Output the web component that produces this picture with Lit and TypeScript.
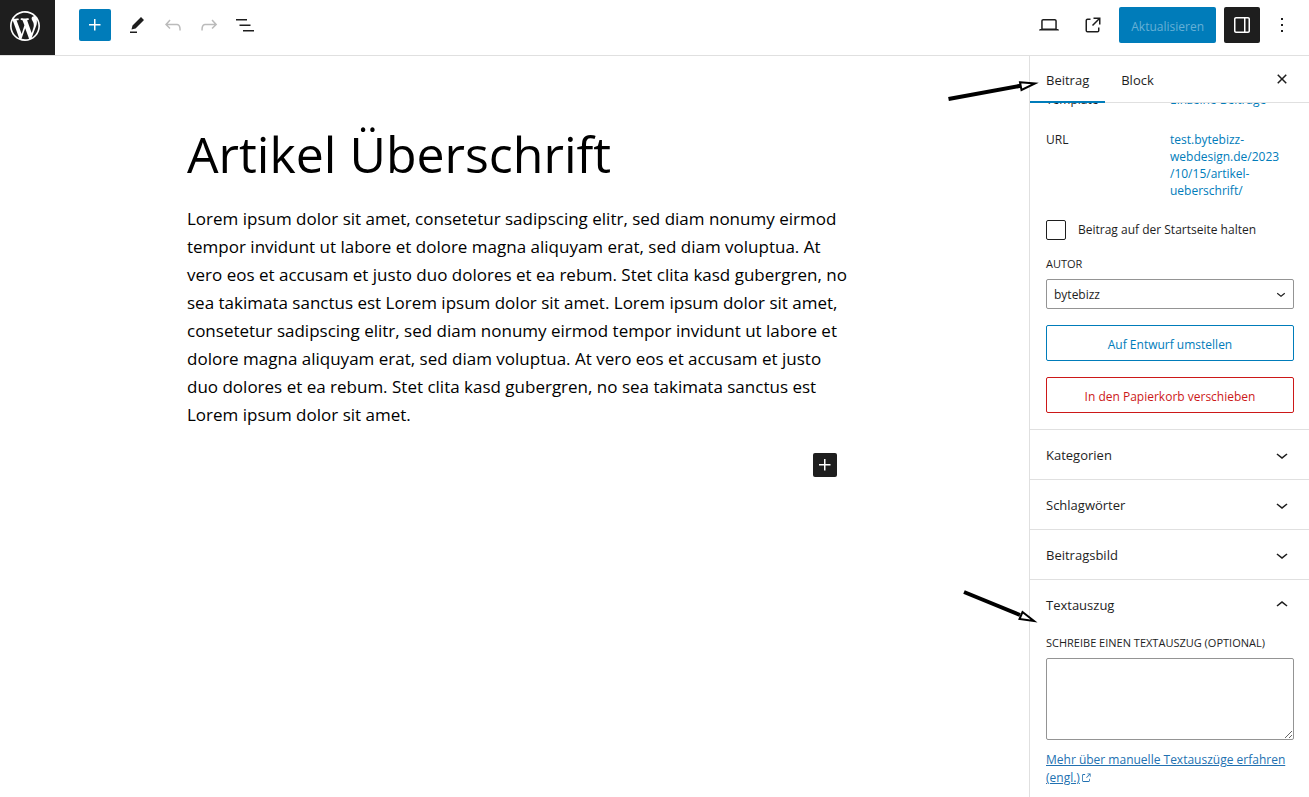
import { LitElement, html, css, svg } from "lit";
import { customElement, property, state } from "lit/decorators.js";
import { classMap } from "lit/directives/class-map.js";

const ICONS = {
  plus: "M11 12.5V17.5H12.5V12.5H17.5V11H12.5V6H11V11H6V12.5H11Z",
  edit: "m19 7-3-3-8.5 8.5-1 4 4-1L19 7Zm-7 11.5H5V20h7v-1.5Z",
  undo: "M18.3 11.7c-.6-.6-1.4-.9-2.3-.9H6.7l2.9-3.3-1.1-1-4.5 5L8.5 16l1-1-2.7-2.7H16c.5 0 .9.2 1.3.5 1 1 1 3.4 1 4.5v.3h1.5v-.2c0-1.5 0-4.3-1.5-5.7z",
  redo: "M15.6 6.5l-1.1 1 2.9 3.3H8c-.9 0-1.7.3-2.3.9-1.4 1.5-1.4 4.2-1.4 5.6v.2h1.5v-.3c0-1.1 0-3.5 1-4.5.3-.3.7-.5 1.3-.5h9.2L14.5 15l1.1 1.1 4.6-4.6-4.6-5z",
  list: "M3 6h11v1.5H3V6Zm3.5 5.5h11V13h-11v-1.5ZM21 17H10v1.5h11V17Z",
  desktop: "M20.5 16h-.7V8c0-1.1-.9-2-2-2H6.2c-1.1 0-2 .9-2 2v8h-.7c-.8 0-1.5.7-1.5 1.5h20c0-.8-.7-1.5-1.5-1.5zM5.7 8c0-.3.2-.5.5-.5h11.6c.3 0 .5.2.5.5v7.6H5.7V8z",
  view: "M19.5 4.5h-7V6h4.44l-5.97 5.97 1.06 1.06L18 7.06v4.44h1.5v-7Zm-13 1a2 2 0 0 0-2 2v10a2 2 0 0 0 2 2h10a2 2 0 0 0 2-2v-3H17v3a.5.5 0 0 1-.5.5h-10a.5.5 0 0 1-.5-.5v-10a.5.5 0 0 1 .5-.5h3V5.5h-3Z",
  external: "M18.2 17c0 .7-.6 1.2-1.2 1.2H7c-.7 0-1.2-.6-1.2-1.2V7c0-.7.6-1.2 1.2-1.2h3.2V4.2H7C5.5 4.2 4.2 5.5 4.2 7v10c0 1.5 1.2 2.8 2.8 2.8h10c1.5 0 2.8-1.2 2.8-2.8v-3.6h-1.5V17zM14.9 3v1.5h3.7l-6.4 6.4 1.1 1.1 6.4-6.4v3.7h1.5V3h-6.3z",
  drawer: "M18 4H6c-1.1 0-2 .9-2 2v12c0 1.1.9 2 2 2h12c1.1 0 2-.9 2-2V6c0-1.1-.9-2-2-2zm-4 14.5H6c-.3 0-.5-.2-.5-.5V6c0-.3.2-.5.5-.5h8v13zm4.5-.5c0 .3-.2.5-.5.5h-2.5v-13H18c.3 0 .5.2.5.5v12z",
  more: "M13 19h-2v-2h2v2zm0-6h-2v-2h2v2zm0-6h-2V5h2v2z",
  close: "M12 13.06l3.712 3.713 1.061-1.06L13.061 12l3.712-3.712-1.06-1.06L12 10.938 8.288 7.227l-1.061 1.06L10.939 12l-3.712 3.712 1.06 1.061L12 13.061z",
  down: "M17.5 11.6L12 16l-5.5-4.4.9-1.2L12 14l4.5-3.6 1 1.2z",
  up: "M6.5 12.4L12 8l5.5 4.4-.9 1.2L12 10l-4.5 3.6-1-1.2z",
};

const LOGO =
  "M20 10c0-5.51-4.49-10-10-10C4.48 0 0 4.49 0 10c0 5.52 4.48 10 10 10 5.51 0 10-4.48 10-10zM7.78 15.37L4.37 6.22c.55-.02 1.17-.08 1.17-.08.5-.06.44-1.13-.06-1.11 0 0-1.45.11-2.37.11-.18 0-.37 0-.58-.01C4.12 2.69 6.87 1.11 10 1.11c2.33 0 4.45.87 6.05 2.34-.68-.11-1.65.39-1.65 1.58 0 .74.45 1.36.9 2.1.35.61.55 1.36.55 2.46 0 1.49-1.4 5-1.4 5l-3.03-8.37c.54-.02.82-.17.82-.17.5-.05.44-1.25-.06-1.22 0 0-1.44.12-2.38.12-.87 0-2.33-.12-2.33-.12-.5-.03-.56 1.2-.06 1.22l.92.08 1.26 3.41zM17.41 10c.24-.64.74-1.87.43-4.25.7 1.29 1.05 2.71 1.05 4.25 0 3.29-1.73 6.24-4.4 7.78.97-2.59 1.94-5.2 2.92-7.78zM6.1 18.09C3.12 16.65 1.11 13.53 1.11 10c0-1.3.23-2.48.72-3.59C3.25 10.3 4.67 14.2 6.1 18.09zm4.03-6.63l2.58 6.98c-.86.29-1.76.45-2.71.45-.79 0-1.57-.11-2.29-.33.81-2.38 1.62-4.74 2.42-7.1z";

const icon = (name: keyof typeof ICONS, size = 24) => html`<svg
  width=${size}
  height=${size}
  viewBox="0 0 24 24"
  fill="currentColor"
  aria-hidden="true"
>
  ${svg`<path d=${ICONS[name]}></path>`}
</svg>`;

const shared = css`
  :host,
  * {
    box-sizing: border-box;
  }
  svg {
    display: block;
    flex: none;
  }
  button {
    display: flex;
    align-items: center;
    justify-content: center;
    margin: 0;
    padding: 0;
    border: 0;
    border-radius: 2px;
    background: none;
    color: #1e1e1e;
    font: inherit;
    cursor: pointer;
  }
`;

@customElement("editor-header")
class EditorHeader extends LitElement {
  static styles = [
    shared,
    css`
      :host {
        display: flex;
        align-items: center;
        height: 56px;
        border-bottom: 1px solid #e0e0e0;
        background: #fff;
      }
      .logo {
        align-self: stretch;
        display: flex;
        align-items: center;
        width: 55px;
        padding: 0 7px 3px;
        background: #1e1e1e;
        color: #fff;
      }
      .tools {
        display: flex;
        align-items: center;
        flex: 1;
        padding: 0 0 5px 24px;
      }
      .actions {
        display: flex;
        align-items: center;
        gap: 8px;
        padding: 0 11px 5px 0;
      }
      .tool {
        width: 36px;
        height: 36px;
      }
      .tool[disabled] {
        color: #bbb;
      }
      .add {
        width: 32px;
        height: 32px;
        margin-right: 8px;
        background: #007cba;
        color: #fff;
      }
      .save {
        height: 36px;
        padding: 4px 12px 0;
        background: #007cba;
        color: #66b0d6;
      }
      .toggle {
        background: #1e1e1e;
        color: #fff;
      }
      .menu {
        width: 32px;
        margin-left: -2px;
      }
    `,
  ];

  render() {
    return html`
      <a class="logo" href="#" aria-label="Beiträge anzeigen">
        <svg width="36" height="36" viewBox="-2 -2 24 24" fill="currentColor" aria-hidden="true">
          <path d=${LOGO}></path>
        </svg>
      </a>
      <div class="tools">
        <button class="add" aria-label="Block hinzufügen">${icon("plus")}</button>
        <button class="tool" aria-label="Werkzeuge">${icon("edit")}</button>
        <button class="tool" disabled aria-label="Rückgängig">${icon("undo")}</button>
        <button class="tool" disabled aria-label="Wiederholen">${icon("redo")}</button>
        <button class="tool" aria-label="Dokumentübersicht">${icon("list")}</button>
      </div>
      <div class="actions">
        <button class="tool" aria-label="Ansicht">${icon("desktop")}</button>
        <button class="tool" aria-label="Beitrag anzeigen">${icon("view")}</button>
        <button class="save">Aktualisieren</button>
        <button class="tool toggle" aria-label="Einstellungen">${icon("drawer")}</button>
        <button class="tool menu" aria-label="Optionen">${icon("more")}</button>
      </div>
    `;
  }
}

@customElement("settings-panel")
class SettingsPanel extends LitElement {
  @property() heading = "";
  @property({ type: Boolean }) open = false;

  static styles = [
    shared,
    css`
      :host {
        display: block;
        border-top: 1px solid #e0e0e0;
      }
      .title {
        margin: 0;
        font-size: 13px;
      }
      .toggle {
        justify-content: space-between;
        width: 100%;
        height: 49px;
        padding: 0 15px 0 16px;
        font-weight: 500;
      }
      .body {
        padding: 6px 15px 16px 16px;
      }
    `,
  ];

  render() {
    return html`
      <h2 class="title">
        <button class="toggle" aria-expanded=${this.open} @click=${() => (this.open = !this.open)}>
          ${this.heading}${icon(this.open ? "up" : "down")}
        </button>
      </h2>
      ${this.open ? html`<div class="body"><slot></slot></div>` : null}
    `;
  }
}

@customElement("editor-sidebar")
class EditorSidebar extends LitElement {
  @state() private tab = "Beitrag";

  static styles = [
    shared,
    css`
      :host {
        display: flex;
        flex-direction: column;
        min-height: 0;
        border-left: 1px solid #e0e0e0;
        background: #fff;
      }
      .tabs {
        display: flex;
        flex: none;
        height: 47px;
        padding-right: 15px;
        border-bottom: 1px solid #e0e0e0;
      }
      .tab {
        height: 47px;
        padding: 0 16px;
        border-radius: 0;
        font-size: 13px;
      }
      .active {
        box-shadow: inset 0 -2px 0 #007cba;
      }
      .close {
        margin-left: auto;
      }
      .scroll {
        flex: 1;
        min-height: 0;
        overflow: hidden;
      }
      .summary {
        display: flex;
        flex-direction: column;
        gap: 16px;
        margin-top: -12px;
        padding: 0 15px 16px 16px;
      }
      .rows {
        display: flex;
        flex-direction: column;
        gap: 23px;
        margin-bottom: 5px;
      }
      .row {
        display: grid;
        grid-template-columns: 1fr 1fr;
        line-height: 17px;
      }
      .row a {
        color: #007cba;
        text-decoration: none;
      }
      .check {
        display: flex;
        align-items: center;
        gap: 12px;
        line-height: 20px;
      }
      .check input {
        appearance: none;
        width: 20px;
        height: 20px;
        margin: 0;
        border: 1px solid #1e1e1e;
        border-radius: 2px;
      }
      .label {
        display: block;
        margin-bottom: 8px;
        font-size: 11px;
        line-height: 15px;
        text-transform: uppercase;
      }
      .select {
        display: grid;
        align-items: center;
      }
      .select select,
      .select svg {
        grid-area: 1 / 1;
      }
      .select svg {
        justify-self: end;
        margin-right: 4px;
        pointer-events: none;
      }
      .select select {
        appearance: none;
        width: 100%;
        height: 30px;
        padding: 2px 7px 0;
        border: 1px solid #949494;
        border-radius: 2px;
        background: #fff;
        color: #1e1e1e;
        font: inherit;
      }
      .wide {
        width: 100%;
        height: 36px;
        padding-top: 4px;
        border: 1px solid #007cba;
        color: #007cba;
      }
      .danger {
        border-color: #cc1818;
        color: #cc1818;
      }
      .excerpt {
        display: block;
        width: 100%;
        height: 82px;
        margin-bottom: 11px;
        border: 1px solid #949494;
        border-radius: 2px;
        font: inherit;
        resize: vertical;
      }
      .help {
        color: #2271b1;
        line-height: 18px;
      }
      .help svg {
        display: inline-block;
        vertical-align: -2px;
      }
    `,
  ];

  render() {
    return html`
      <div class="tabs" role="tablist">
        ${["Beitrag", "Block"].map(
          (name) => html`<button
            role="tab"
            aria-selected=${this.tab === name}
            class=${classMap({ tab: true, active: this.tab === name })}
            @click=${() => (this.tab = name)}
          >
            ${name}
          </button>`
        )}
        <button class="close" aria-label="Einstellungen schließen">${icon("close")}</button>
      </div>
      <div class="scroll">
        <div class="summary">
          <div class="rows">
            <div class="row"><span>Template</span><a href="#">Einzelne Beiträge</a></div>
            <div class="row">
              <span>URL</span>
              <a href="#">test.bytebizz-<br />webdesign.de/2023<br />/10/15/artikel-<br />ueberschrift/</a>
            </div>
          </div>
          <label class="check"><input type="checkbox" />Beitrag auf der Startseite halten</label>
          <div>
            <label class="label" for="author">Autor</label>
            <div class="select">
              <select id="author">
                <option>bytebizz</option>
              </select>
              ${icon("down", 18)}
            </div>
          </div>
          <button class="wide">Auf Entwurf umstellen</button>
          <button class="wide danger">In den Papierkorb verschieben</button>
        </div>
        <settings-panel heading="Kategorien"></settings-panel>
        <settings-panel heading="Schlagwörter"></settings-panel>
        <settings-panel heading="Beitragsbild"></settings-panel>
        <settings-panel heading="Textauszug" open>
          <label class="label" for="excerpt">Schreibe einen Textauszug (optional)</label>
          <textarea class="excerpt" id="excerpt"></textarea>
          <a class="help" href="#">Mehr über manuelle Textauszüge erfahren (engl.)${icon("external", 12)}</a>
        </settings-panel>
      </div>
    `;
  }
}

@customElement("editor-canvas")
class EditorCanvas extends LitElement {
  static styles = [
    shared,
    css`
      :host {
        display: block;
        padding: 63px 24px 0 19px;
        color: #000;
      }
      .post {
        display: flex;
        flex-direction: column;
        max-width: 650px;
        margin: 0 auto;
      }
      .title {
        margin: 0;
        font-size: 50px;
        font-weight: 400;
        line-height: 70px;
      }
      .text {
        margin: 16px 0 24px;
        font-size: 17px;
        line-height: 28px;
        white-space: nowrap;
      }
      .add {
        align-self: flex-end;
        width: 24px;
        height: 24px;
        background: #1e1e1e;
        color: #fff;
      }
    `,
  ];

  render() {
    return html`
      <article class="post">
        <h1 class="title">Artikel Überschrift</h1>
        <p class="text">
          Lorem ipsum dolor sit amet, consetetur sadipscing elitr, sed diam nonumy eirmod<br />
          tempor invidunt ut labore et dolore magna aliquyam erat, sed diam voluptua. At<br />
          vero eos et accusam et justo duo dolores et ea rebum. Stet clita kasd gubergren, no<br />
          sea takimata sanctus est Lorem ipsum dolor sit amet. Lorem ipsum dolor sit amet,<br />
          consetetur sadipscing elitr, sed diam nonumy eirmod tempor invidunt ut labore et<br />
          dolore magna aliquyam erat, sed diam voluptua. At vero eos et accusam et justo<br />
          duo dolores et ea rebum. Stet clita kasd gubergren, no sea takimata sanctus est<br />
          Lorem ipsum dolor sit amet.
        </p>
        <button class="add" aria-label="Block hinzufügen">${icon("plus")}</button>
      </article>
    `;
  }
}

@customElement("app-root")
class AppRoot extends LitElement {
  static styles = css`
    :host {
      position: relative;
      display: grid;
      grid-template-rows: auto minmax(0, 1fr);
      grid-template-columns: minmax(0, 1fr) 280px;
      height: 100vh;
      overflow: hidden;
      background: #fff;
      color: #1e1e1e;
      font: 400 12px/18px "Segoe UI", "Open Sans", "Noto Sans", sans-serif;
    }
    editor-header {
      grid-column: 1 / -1;
    }
    .arrow {
      position: absolute;
      right: 269px;
      pointer-events: none;
    }
    .to-tab {
      top: 76px;
    }
    .to-excerpt {
      top: 588px;
    }
  `;

  render() {
    return html`
      <editor-header></editor-header>
      <editor-canvas></editor-canvas>
      <editor-sidebar></editor-sidebar>
      <svg class="arrow to-tab" width="94" height="30" viewBox="0 0 94 30" aria-hidden="true">
        <path d="M2.5 23 76 9.5" stroke="#000" stroke-width="4" />
        <path d="M74 6.3 89 7.5 75.5 14Z" fill="#fff" stroke="#000" stroke-width="2" />
      </svg>
      <svg class="arrow to-excerpt" width="94" height="40" viewBox="0 0 94 40" aria-hidden="true">
        <path d="M18 4 74 27" stroke="#000" stroke-width="4" />
        <path d="M76.5 24 88 33 73.5 31Z" fill="#fff" stroke="#000" stroke-width="2" />
      </svg>
    `;
  }
}
